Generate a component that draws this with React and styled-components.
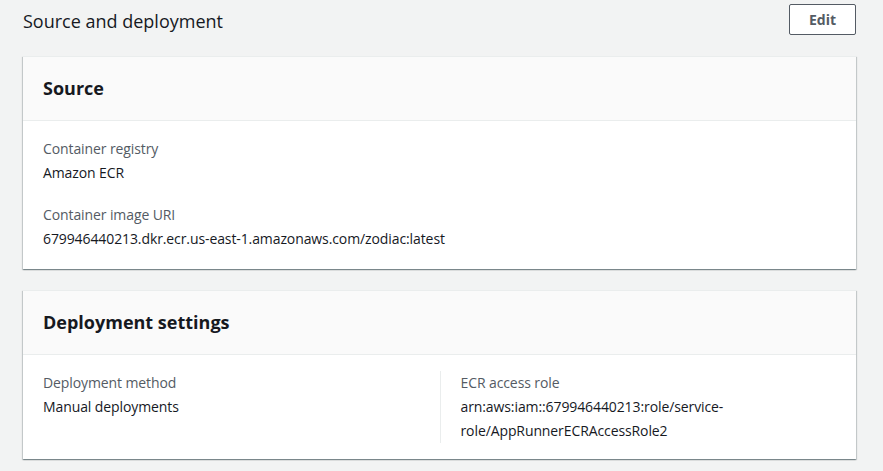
import React from 'react';
import styled, { createGlobalStyle } from 'styled-components';

const GlobalStyle = createGlobalStyle`
    body {
        margin: 0;
        background: #f2f3f3;
        font-family: "Open Sans", "Noto Sans", sans-serif;
        color: #16191f;
    }
`;

const Page = styled.div`
    padding: 4px 27px 12px 23px;
`;

const PageHeader = styled.div`
    display: flex;
    justify-content: space-between;
    align-items: center;
    margin-bottom: 21px;
`;

const PageTitle = styled.h2`
    margin: 0;
    padding-top: 3px;
    font-size: 18px;
    font-weight: 400;
    line-height: 24px;
    color: #16191f;
`;

const Button = styled.button`
    height: 31px;
    padding: 0 19px;
    background: #fff;
    border: 1px solid #545b64;
    border-radius: 2px;
    font-family: inherit;
    font-size: 14px;
    font-weight: 700;
    color: #545b64;
    cursor: pointer;
`;

const Card = styled.section`
    background: #fff;
    border-top: 1px solid #eaeded;
    box-shadow: 0 1px 1px 0 rgba(0, 28, 36, 0.3), 1px 1px 1px 0 rgba(0, 28, 36, 0.15),
        -1px 1px 1px 0 rgba(0, 28, 36, 0.15);
    margin-bottom: 21px;
`;

const CardHeader = styled.div`
    background: #fafafa;
    border-bottom: 1px solid #eaeded;
    padding: 19px 20px 20px;
`;

const CardTitle = styled.h3`
    margin: 0;
    font-size: 18px;
    font-weight: 700;
    line-height: 24px;
`;

const CardBody = styled.div`
    padding: 16px 20px ${p => p.$bottom || 18}px;
`;

const Columns = styled.div`
    display: grid;
    grid-template-columns: repeat(${p => p.$count}, 1fr);
`;

const Column = styled.div`
    & + & {
        border-left: 1px solid #eaeded;
        padding-left: 20px;
    }
    padding-right: 20px;
`;

const Field = styled.div`
    & + & {
        margin-top: 18px;
    }
`;

const Label = styled.div`
    font-size: 14px;
    line-height: 24px;
    letter-spacing: -0.1px;
    color: #545b64;
`;

const Value = styled.div`
    font-size: 14px;
    line-height: 24px;
    letter-spacing: -0.1px;
    color: #16191f;
`;

function App() {
    return (
        <>
            <GlobalStyle />
            <Page>
                <PageHeader>
                    <PageTitle>Source and deployment</PageTitle>
                    <Button>Edit</Button>
                </PageHeader>

                <Card>
                    <CardHeader>
                        <CardTitle>Source</CardTitle>
                    </CardHeader>
                    <CardBody>
                        <Field>
                            <Label>Container registry</Label>
                            <Value>Amazon ECR</Value>
                        </Field>
                        <Field>
                            <Label>Container image URI</Label>
                            <Value>679946440213.dkr.ecr.us-east-1.amazonaws.com/zodiac:latest</Value>
                        </Field>
                    </CardBody>
                </Card>

                <Card>
                    <CardHeader>
                        <CardTitle>Deployment settings</CardTitle>
                    </CardHeader>
                    <CardBody $bottom={16}>
                        <Columns $count={2}>
                            <Column>
                                <Label>Deployment method</Label>
                                <Value>Manual deployments</Value>
                            </Column>
                            <Column>
                                <Label>ECR access role</Label>
                                <Value>arn:aws:iam::679946440213:role/service-role/AppRunnerECRAccessRole2</Value>
                            </Column>
                        </Columns>
                    </CardBody>
                </Card>
            </Page>
        </>
    );
}

export default App;
